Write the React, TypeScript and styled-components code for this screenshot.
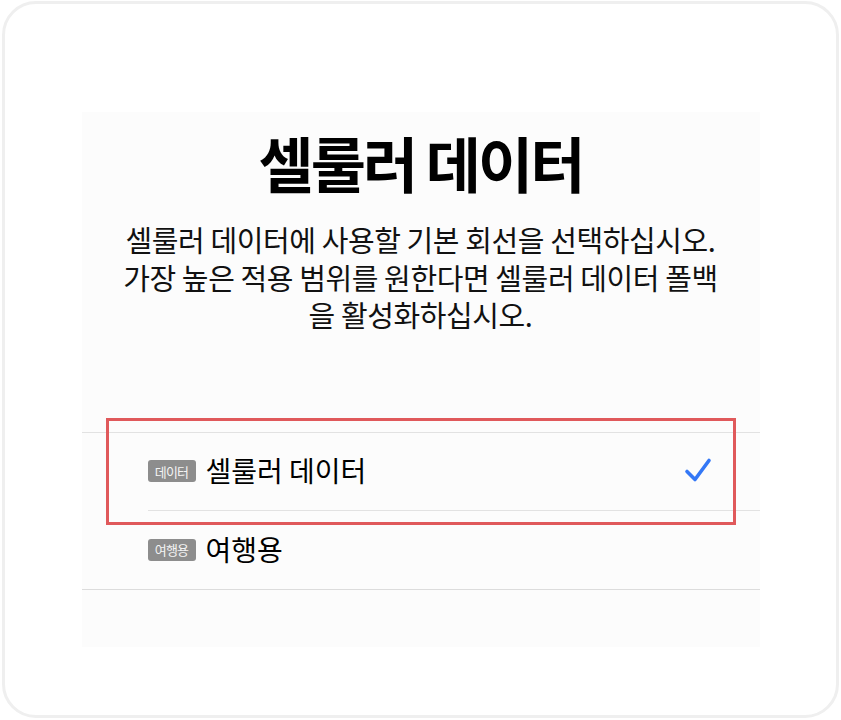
import React from "react";
import styled, { createGlobalStyle } from "styled-components";

const GlobalStyle = createGlobalStyle`
  html, body { margin: 0; padding: 0; background: #ffffff; }
  body { font-family: "Noto Sans CJK KR", "Noto Sans", sans-serif; }
  * { box-sizing: border-box; }
`;

const Frame = styled.div`
  width: 841px;
  height: 720px;
  padding: 1px 2px 2px 2px;
`;

const Card = styled.div`
  height: 100%;
  border: 3px solid #efefef;
  border-radius: 34px;
  background: #ffffff;
  display: flex;
  justify-content: center;
  padding-top: 108px;
`;

const Panel = styled.div`
  position: relative;
  width: 678px;
  height: 535px;
  background: #fcfcfc;
  display: flex;
  flex-direction: column;
  align-items: center;
`;

const Title = styled.h1`
  margin: 10px 0 0;
  font-size: 60px;
  line-height: 80px;
  font-weight: 700;
  letter-spacing: -3px;
  color: #000;
`;

const Description = styled.p`
  margin: 19px 0 0;
  font-size: 29px;
  line-height: 37.5px;
  letter-spacing: -0.4px;
  text-align: center;
  color: #111;
`;

const List = styled.div`
  align-self: stretch;
  margin-top: 98px;
  border-top: 1px solid #e2e2e2;
`;

const Row = styled.div<{ $last?: boolean }>`
  display: flex;
  align-items: center;
  height: ${(p) => (p.$last ? "79px" : "78px")};
  padding-left: 66px;
  padding-right: 48px;
  ${(p) => (p.$last ? "border-bottom: 1px solid #dcdcdc;" : "")}
`;

const RowInner = styled.div<{ $divider?: boolean }>`
  flex: 1;
  height: 100%;
  display: flex;
  align-items: center;
  gap: 10px;
  ${(p) => (p.$divider ? "border-bottom: 1px solid #e2e2e2; margin-right: -48px; padding-right: 48px;" : "")}
`;

const Badge = styled.span`
  display: inline-flex;
  align-items: center;
  justify-content: center;
  width: 48px;
  height: 22px;
  border-radius: 3px;
  background: #8d8d8d;
  color: #f4f4f4;
  font-size: 13px;
  letter-spacing: -0.8px;
`;

const Label = styled.span`
  flex: 1;
  font-size: 28px;
  letter-spacing: 0;
  color: #000;
  margin-top: -2px;
`;

const Check = styled.svg`
  width: 28px;
  height: 28px;
`;

const Highlight = styled.div`
  position: absolute;
  left: 24px;
  top: 306px;
  width: 630px;
  height: 107px;
  border: 3px solid #e0595b;
  pointer-events: none;
`;

export default function App() {
  return (
    <>
      <GlobalStyle />
      <Frame>
        <Card>
          <Panel>
            <Title>셀룰러 데이터</Title>
            <Description>
              셀룰러 데이터에 사용할 기본 회선을 선택하십시오.
              <br />
              가장 높은 적용 범위를 원한다면 셀룰러 데이터 폴백
              <br />을 활성화하십시오.
            </Description>
            <List>
              <Row>
                <RowInner $divider>
                  <Badge>데이터</Badge>
                  <Label>셀룰러 데이터</Label>
                  <Check viewBox="0 0 28 28" fill="none">
                    <path
                      d="M3 14.5 L11 22.5 L25 3.5"
                      stroke="#3478f6"
                      strokeWidth="3.6"
                      strokeLinecap="round"
                      strokeLinejoin="round"
                    />
                  </Check>
                </RowInner>
              </Row>
              <Row $last>
                <RowInner>
                  <Badge>여행용</Badge>
                  <Label>여행용</Label>
                </RowInner>
              </Row>
            </List>
            <Highlight />
          </Panel>
        </Card>
      </Frame>
    </>
  );
}
